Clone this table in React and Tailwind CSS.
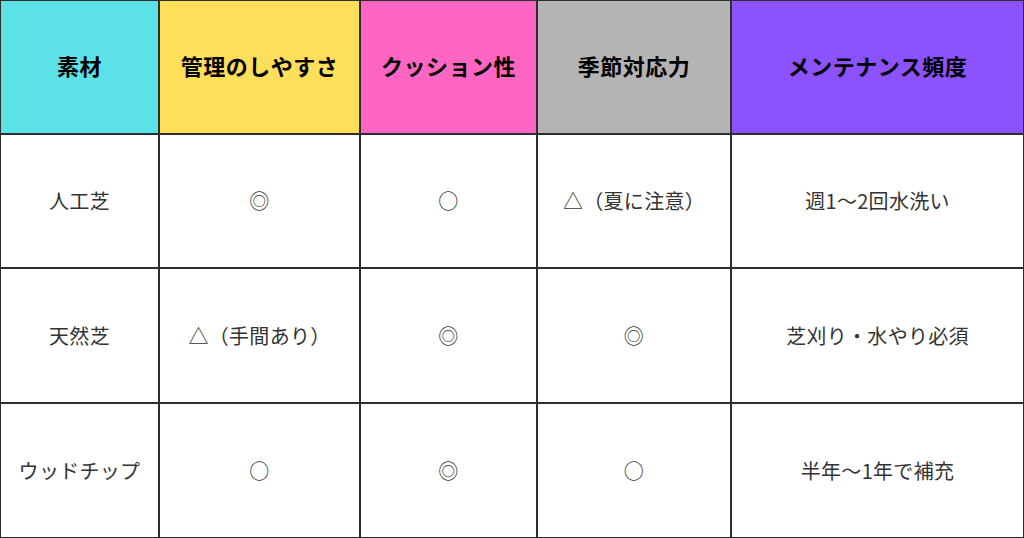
export default function App() {
  const headers = [
    { t: "素材", bg: "bg-[#5ce1e6]" },
    { t: "管理のしやすさ", bg: "bg-[#ffde59]" },
    { t: "クッション性", bg: "bg-[#ff66c4]" },
    { t: "季節対応力", bg: "bg-[#b4b4b4]" },
    { t: "メンテナンス頻度", bg: "bg-[#8c52ff]" },
  ];
  const rows = [
    ["人工芝", "◎", "○", "△（夏に注意）", "週1〜2回水洗い"],
    ["天然芝", "△（手間あり）", "◎", "◎", "芝刈り・水やり必須"],
    ["ウッドチップ", "○", "◎", "○", "半年〜1年で補充"],
  ];
  return (
    <div
      className="w-[1024px] h-[538px] bg-[#2e2e2e] p-[1px] grid gap-[2px] grid-cols-[157px_199px_175px_192px_291px] grid-rows-[132px_132px_133px_133px]"
      style={{ fontFamily: '"Noto Sans CJK JP", "Noto Sans", sans-serif' }}
    >
      {headers.map((h, i) => (
        <div
          key={i}
          className={`${h.bg} flex items-center justify-center pb-[3px] text-[22px] font-bold text-black tracking-[0.5px]`}
        >
          {h.t}
        </div>
      ))}
      {rows.map((r, ri) =>
        r.map((c, ci) => (
          <div
            key={`${ri}-${ci}`}
            className="bg-white flex items-center justify-center text-[20px] text-[#333333] tracking-[0.3px]"
          >
            {c}
          </div>
        ))
      )}
    </div>
  );
}
